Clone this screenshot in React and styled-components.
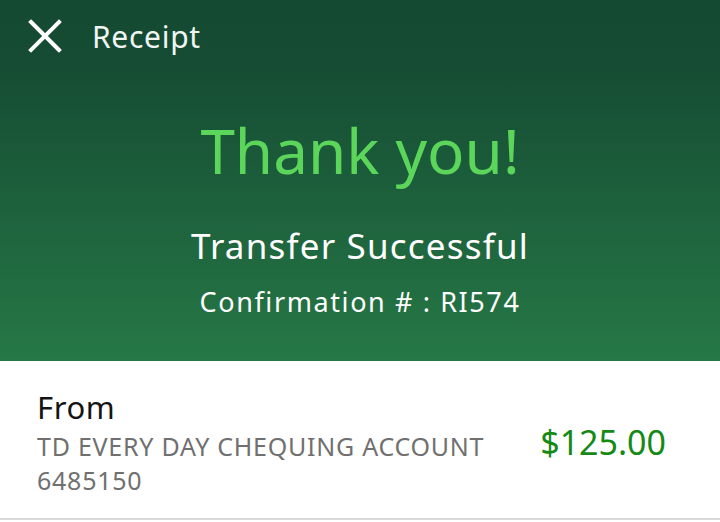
import React from "react";
import styled, { createGlobalStyle } from "styled-components";

const GlobalStyle = createGlobalStyle`
  html, body {
    margin: 0;
    padding: 0;
    background: #ffffff;
  }
  body {
    font-family: "Noto Sans", "Open Sans", sans-serif;
  }
`;

const receipt = {
  title: "Receipt",
  heading: "Thank you!",
  status: "Transfer Successful",
  confirmation: "RI574",
  from: "TD EVERY DAY CHEQUING ACCOUNT",
  account: "6485150",
  amount: "$125.00",
};

function CloseIcon() {
  return (
    <svg width="34" height="34" viewBox="0 0 34 34" fill="none">
      <path
        d="M3 3 L31 31 M31 3 L3 31"
        stroke="#ffffff"
        strokeWidth="4"
        strokeLinecap="square"
      />
    </svg>
  );
}

export default function App() {
  return (
    <Page>
      <GlobalStyle />
      <Hero>
        <TopBar>
          <CloseButton aria-label="Close">
            <CloseIcon />
          </CloseButton>
          <BarTitle>{receipt.title}</BarTitle>
        </TopBar>
        <Heading>{receipt.heading}</Heading>
        <Status>{receipt.status}</Status>
        <Confirmation>Confirmation # : {receipt.confirmation}</Confirmation>
      </Hero>
      <DetailRow>
        <Account>
          <Label>From</Label>
          <AccountName>{receipt.from}</AccountName>
          <AccountName>{receipt.account}</AccountName>
        </Account>
        <Amount>{receipt.amount}</Amount>
      </DetailRow>
    </Page>
  );
}

const Page = styled.div`
  width: 720px;
  min-height: 522px;
  background: #ffffff;
`;

const Hero = styled.section`
  height: 361px;
  box-sizing: border-box;
  background: linear-gradient(180deg, #144a32 0%, #154c33 18%, #267846 100%);
  display: flex;
  flex-direction: column;
  align-items: center;
`;

const TopBar = styled.header`
  align-self: stretch;
  height: 72px;
  display: flex;
  align-items: center;
  padding: 0 0 0 28px;
  gap: 30px;
`;

const CloseButton = styled.button`
  border: 0;
  padding: 0;
  background: none;
  display: flex;
  width: 34px;
  height: 34px;
  cursor: pointer;
`;

const BarTitle = styled.h1`
  margin: 0;
  font-size: 30px;
  font-weight: 400;
  color: #f1f5f2;
  letter-spacing: 0.7px;
`;

const Heading = styled.h2`
  margin: 38px 0 0;
  font-size: 62px;
  line-height: 80px;
  font-weight: 400;
  color: #5bd65b;
`;

const Status = styled.p`
  margin: 34px 0 0;
  font-size: 35px;
  line-height: 44px;
  letter-spacing: 1.2px;
  color: #ffffff;
`;

const Confirmation = styled.p`
  margin: 16px 0 0;
  font-size: 27px;
  line-height: 36px;
  letter-spacing: 1.6px;
  color: #ffffff;
`;

const DetailRow = styled.div`
  height: 159px;
  box-sizing: border-box;
  border-bottom: 2px solid #d9d9d9;
  display: flex;
  align-items: center;
  justify-content: space-between;
  padding: 0 54px 0 37px;
`;

const Account = styled.div`
  display: flex;
  flex-direction: column;
  padding-top: 2px;
`;

const Label = styled.div`
  font-size: 31px;
  line-height: 44px;
  letter-spacing: 0.6px;
  color: #141414;
`;

const AccountName = styled.div`
  font-size: 25px;
  line-height: 34px;
  letter-spacing: 0.75px;
  color: #707070;
`;

const Amount = styled.div`
  font-size: 34px;
  color: #148a14;
  margin-top: 4px;
`;
